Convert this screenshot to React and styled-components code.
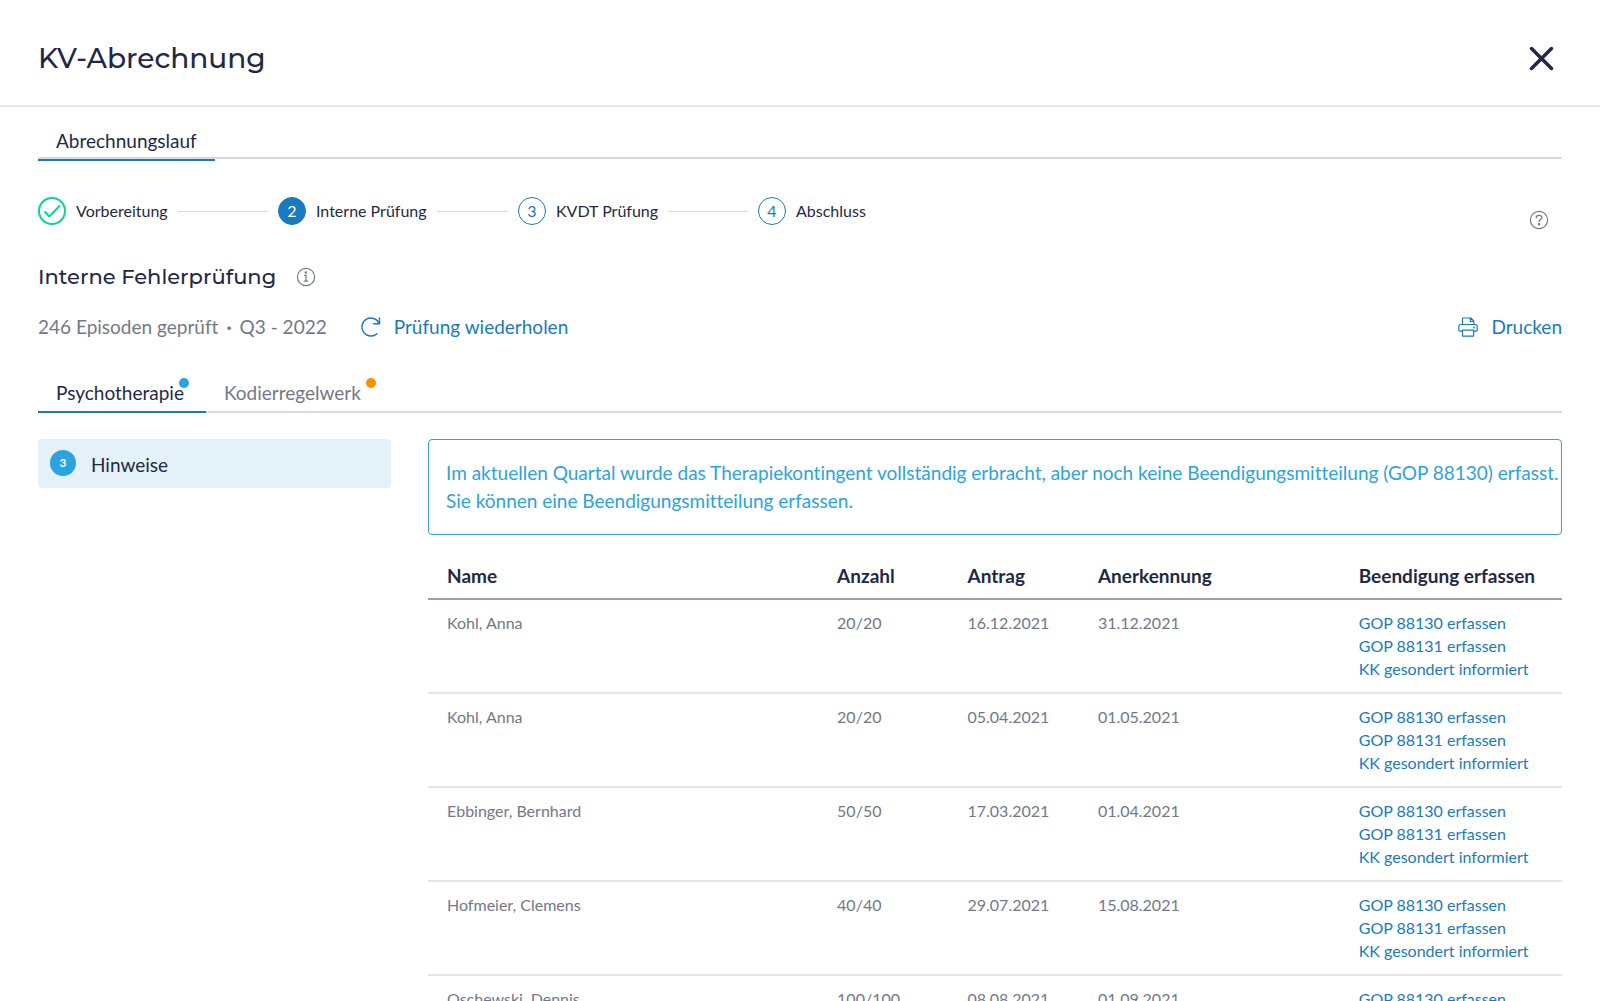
import React from "react";
import styled, {createGlobalStyle, css} from "styled-components";

const colors = {
    ink: "#1f2945",
    grey: "#737888",
    blue: "#187bc0",
    sky: "#2ca3e0",
    green: "#0ad29c",
    orange: "#ff8d00",
    line: "#e5e6ed",
    tabLine: "#d9dae1",
}

const GlobalStyle = createGlobalStyle`
  * { box-sizing: border-box; }
  body {
    margin: 0;
    background: #fff;
    color: ${colors.ink};
    font-family: Lato, "Liberation Sans", sans-serif;
    font-size: 19px;
    font-variant-ligatures: none;
    line-height: 24px;
  }
  button {
    margin: 0;
    padding: 0;
    border: 0;
    background: none;
    color: inherit;
    font: inherit;
    font-variant-ligatures: none;
    cursor: pointer;
  }
  svg { display: block; flex: none; }
`

const Page = styled.div`
  height: 100vh;
  overflow: hidden;
`

const Header = styled.header`
  display: flex;
  align-items: center;
  justify-content: space-between;
  height: 107px;
  padding: 12px 46px 0 38px;
  border-bottom: 2px solid ${colors.line};
`

const Title = styled.h1`
  margin: 0;
  padding-bottom: 2px;
  font: 500 28px/40px Montserrat, Inter, sans-serif;
`

const Content = styled.main`
  padding: 16px 38px 0;
`

const Tabs = styled.div`
  display: flex;
  border-bottom: 2px solid ${colors.tabLine};
`

const Tab = styled.button`
  position: relative;
  height: 39px;
  padding: 0 22px 0 18px;
  margin-bottom: -2px;
  color: ${props => props.$active ? colors.ink : colors.grey};
  border-bottom: 2px solid ${props => props.$active ? colors.blue : "transparent"};
  ${props => props.$main && css`
    height: 38px;
    padding: 0 18px;
    margin-bottom: -4px;
  `}
`

const Dot = styled.span`
  position: absolute;
  top: 4px;
  right: ${props => props.$right}px;
  width: 10px;
  height: 10px;
  border-radius: 50%;
  background: ${props => props.$color};
`

const StepsRow = styled.div`
  display: flex;
  justify-content: space-between;
  align-items: center;
  height: 28px;
  margin-top: 38px;
`

const Steps = styled.ol`
  display: flex;
  margin: 0;
  padding: 0;
  list-style: none;
`

const Step = styled.li`
  display: flex;
  align-items: center;
  gap: 10px;
  width: 240px;
  font-size: 16px;
  white-space: nowrap;

  &:not(:last-child)::after {
    content: "";
    flex: 1;
    height: 1px;
    margin-right: 10px;
    background: ${colors.tabLine};
  }
`

const StepCircle = styled.span`
  display: flex;
  align-items: center;
  justify-content: center;
  width: 28px;
  height: 28px;
  flex: none;
  border: 1px solid ${colors.blue};
  border-radius: 50%;
  color: ${colors.blue};
  ${props => props.$state === "active" && css`
    background: ${colors.blue};
    color: #fff;
  `}
  ${props => props.$state === "done" && css`
    border: 2px solid ${colors.green};
    color: ${colors.green};
  `}
`

const HelpButton = styled.button`
  margin: 18px 13px 0 0;
  color: ${colors.grey};
`

const SubTitleRow = styled.div`
  display: flex;
  align-items: center;
  gap: 20px;
  margin-top: 38px;
`

const SubTitle = styled.h2`
  margin: 0;
  font: 500 21px/28px Montserrat, Inter, sans-serif;
`

const InfoButton = styled.button`
  color: ${colors.grey};
`

const Toolbar = styled.div`
  display: flex;
  align-items: center;
  margin-top: 24px;
  color: ${colors.grey};
`

const Separator = styled.span`
  margin: 0 8px;
  font-weight: 700;
`

const Action = styled.button`
  display: flex;
  align-items: center;
  gap: 13px;
  margin-left: ${props => props.$end ? "auto" : "34px"};
  color: ${colors.blue};
`

const CheckTabs = styled(Tabs)`
  margin-top: 35px;
`

const Panels = styled.div`
  display: grid;
  grid-template-columns: 353px minmax(0, 1fr);
  align-items: start;
  gap: 37px;
  margin-top: 26px;
`

const SideItem = styled.button`
  display: flex;
  align-items: center;
  gap: 15px;
  width: 100%;
  height: 49px;
  padding: 2px 12px 0;
  border-radius: 4px;
  background: #e5f1f8;
  text-align: left;
`

const Count = styled.span`
  width: 26px;
  height: 26px;
  margin-bottom: 3px;
  border-radius: 50%;
  background: ${colors.sky};
  color: #fff;
  font-size: 12px;
  font-weight: 700;
  line-height: 26px;
  text-align: center;
`

const Notice = styled.p`
  margin: 0;
  padding: 19px 0 19px 17px;
  border: 1px solid ${colors.sky};
  border-radius: 4px;
  color: ${colors.sky};
  line-height: 28px;
`

const Table = styled.table`
  width: 100%;
  margin-top: 19px;
  border-collapse: collapse;
  table-layout: fixed;
  font-size: 16px;
`

const Th = styled.th`
  width: ${props => props.$width};
  height: 45px;
  padding: 0 0 1px 19px;
  border-bottom: 2px solid #9a9eae;
  font-size: 19px;
  text-align: left;
  white-space: nowrap;
`

const Td = styled.td`
  height: 94px;
  padding: 11px 0 0 19px;
  border-bottom: 2px solid ${colors.line};
  color: ${colors.grey};
  vertical-align: top;
`

const RowLink = styled.a`
  display: block;
  line-height: 23px;
  color: ${colors.blue};
  text-decoration: none;
  white-space: nowrap;
`

const CloseIcon = () => (
    <svg width="25" height="25" viewBox="0 0 25 25" fill="none" stroke="currentColor" strokeWidth="3.500" strokeLinecap="round">
        <path d="M2.500 2.500l20 20M22.500 2.500l-20 20"/>
    </svg>
)

const CheckIcon = () => (
    <svg width="18" height="14" viewBox="0 0 18 14" fill="none" stroke="currentColor" strokeWidth="1.9" strokeLinecap="round" strokeLinejoin="round">
        <path d="M2 8l4.300 4.500L16.500 2"/>
    </svg>
)

const HelpIcon = () => (
    <svg width="20" height="20" viewBox="0 0 20 20" fill="none" stroke="currentColor" strokeWidth="1.2" strokeLinecap="round">
        <circle cx="10" cy="10" r="8.600"/>
        <path d="M7.200 7.700c0-1.500 1.200-2.300 2.800-2.300s2.900.8 2.900 2.200c0 1.900-2.900 1.900-2.900 4.100"/>
        <circle cx="10" cy="14.200" r=".6" fill="currentColor"/>
    </svg>
)

const InfoIcon = () => (
    <svg width="20" height="20" viewBox="0 0 20 20" fill="none" stroke="currentColor" strokeWidth="1.2" strokeLinecap="round">
        <circle cx="10" cy="10" r="8.600"/>
        <path d="M8.500 8.300H10v5.700M8.200 14.200h3.600"/>
        <circle cx="9.800" cy="5.500" r=".6" fill="currentColor"/>
    </svg>
)

const RepeatIcon = () => (
    <svg width="20" height="20" viewBox="0 0 20 20" fill="none" stroke="currentColor" strokeWidth="1.400" strokeLinecap="round" strokeLinejoin="round">
        <path d="M18.500 1v5.700h-5.700M18.200 6.400A9 9 0 1 0 16 16.700"/>
    </svg>
)

const PrinterIcon = () => (
    <svg width="20" height="20" viewBox="0 0 20 20" fill="none" stroke="currentColor" strokeWidth="1.2" strokeLinejoin="round">
        <path d="M4.500 7.500V1h8.300l3 3v3.500M12.300 1v3.500h3.500"/>
        <path d="M4.500 14.200H1.800a1 1 0 0 1-1-1V9.500a2 2 0 0 1 2-2h14.400a2 2 0 0 1 2 2v3.700a1 1 0 0 1-1 1h-2.600"/>
        <path d="M4.500 13.200h11.100v5.900H4.500z"/>
        <circle cx="16" cy="10.500" r=".4"/>
    </svg>
)

const steps = [
    {label: "Vorbereitung", state: "done"},
    {label: "Interne Prüfung", state: "active"},
    {label: "KVDT Prüfung"},
    {label: "Abschluss"},
]

const columns = [
    {label: "Name", width: "34.4%"},
    {label: "Anzahl", width: "11.5%"},
    {label: "Antrag", width: "11.5%"},
    {label: "Anerkennung", width: "23%"},
    {label: "Beendigung erfassen", width: "19.6%"},
]

const rows = [
    ["Kohl, Anna", "20/20", "16.12.2021", "31.12.2021"],
    ["Kohl, Anna", "20/20", "05.04.2021", "01.05.2021"],
    ["Ebbinger, Bernhard", "50/50", "17.03.2021", "01.04.2021"],
    ["Hofmeier, Clemens", "40/40", "29.07.2021", "15.08.2021"],
    ["Oschewski, Dennis", "100/100", "08.08.2021", "01.09.2021"],
]

const links = ["GOP 88130 erfassen", "GOP 88131 erfassen", "KK gesondert informiert"]

export default function App() {
    return (
        <Page>
            <GlobalStyle/>
            <Header>
                <Title>KV-Abrechnung</Title>
                <button aria-label="Schließen"><CloseIcon/></button>
            </Header>
            <Content>
                <Tabs role="tablist">
                    <Tab $main $active role="tab" aria-selected="true">Abrechnungslauf</Tab>
                </Tabs>

                <StepsRow>
                    <Steps>
                        {steps.map((step, i) => (
                            <Step key={step.label}>
                                <StepCircle $state={step.state}>
                                    {step.state === "done" ? <CheckIcon/> : i + 1}
                                </StepCircle>
                                {step.label}
                            </Step>
                        ))}
                    </Steps>
                    <HelpButton aria-label="Hilfe"><HelpIcon/></HelpButton>
                </StepsRow>

                <SubTitleRow>
                    <SubTitle>Interne Fehlerprüfung</SubTitle>
                    <InfoButton aria-label="Information"><InfoIcon/></InfoButton>
                </SubTitleRow>

                <Toolbar>
                    <span>246 Episoden geprüft</span>
                    <Separator>·</Separator>
                    <span>Q3 - 2022</span>
                    <Action><RepeatIcon/>Prüfung wiederholen</Action>
                    <Action $end><PrinterIcon/>Drucken</Action>
                </Toolbar>

                <CheckTabs role="tablist">
                    <Tab $active role="tab" aria-selected="true">
                        Psychotherapie<Dot $color={colors.sky} $right={17}/>
                    </Tab>
                    <Tab role="tab" aria-selected="false">
                        Kodierregelwerk<Dot $color={colors.orange} $right={7}/>
                    </Tab>
                </CheckTabs>

                <Panels>
                    <SideItem><Count>3</Count>Hinweise</SideItem>
                    <section>
                        <Notice>
                            Im aktuellen Quartal wurde das Therapiekontingent vollständig erbracht, aber noch keine Beendigungsmitteilung (GOP 88130) erfasst.
                            <br/>
                            Sie können eine Beendigungsmitteilung erfassen.
                        </Notice>
                        <Table>
                            <thead>
                                <tr>
                                    {columns.map(col => (
                                        <Th key={col.label} scope="col" $width={col.width}>{col.label}</Th>
                                    ))}
                                </tr>
                            </thead>
                            <tbody>
                                {rows.map((row, i) => (
                                    <tr key={i}>
                                        {row.map((cell, j) => <Td key={j}>{cell}</Td>)}
                                        <Td>
                                            {links.map(link => <RowLink key={link} href="#">{link}</RowLink>)}
                                        </Td>
                                    </tr>
                                ))}
                            </tbody>
                        </Table>
                    </section>
                </Panels>
            </Content>
        </Page>
    )
}
